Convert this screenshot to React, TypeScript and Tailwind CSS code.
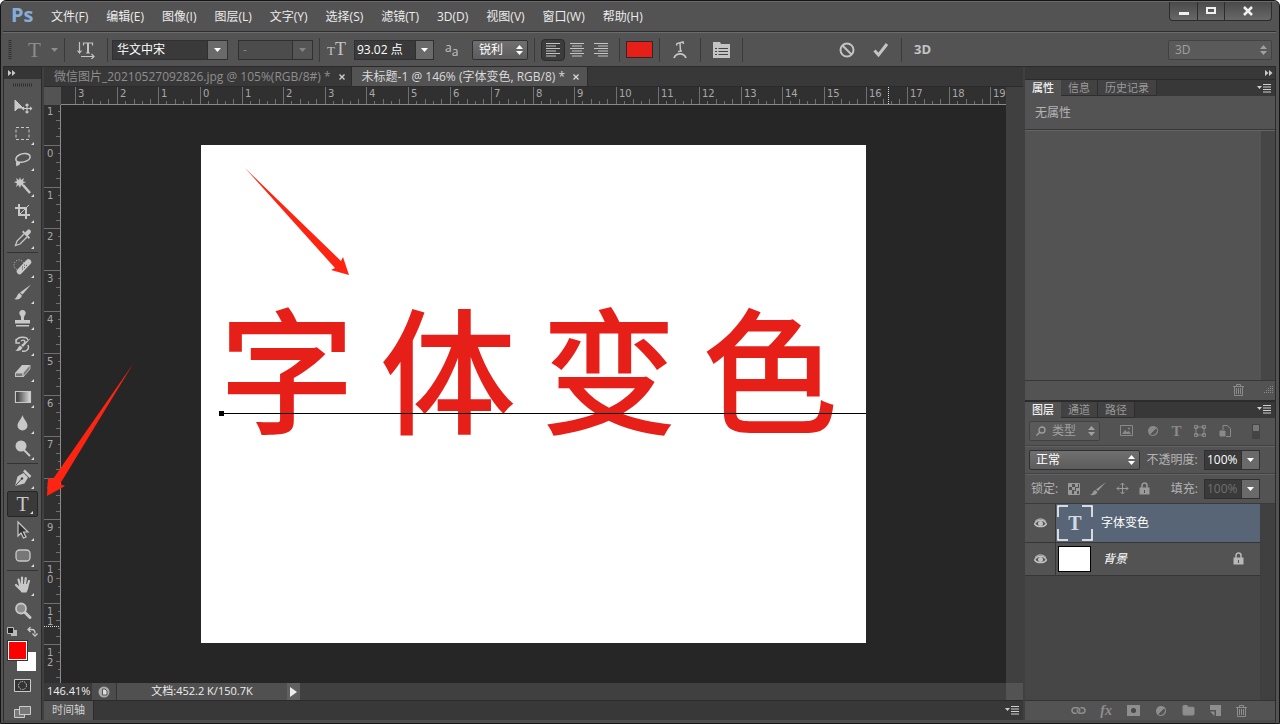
import React from 'react';
import { Link, Folder } from 'lucide-react';

const FONT = "font-['Open_Sans','Noto_Sans_CJK_SC',sans-serif]";

const menus = [
    '文件(F)', '编辑(E)', '图像(I)', '图层(L)', '文字(Y)', '选择(S)',
    '滤镜(T)', '3D(D)', '视图(V)', '窗口(W)', '帮助(H)',
];

const UNIT = 41.6;

const DownArrow: React.FC = () => (
    <svg width="7" height="4" viewBox="0 0 7 4" className="fill-current">
        <path d="M0 0h7L3.5 4z" />
    </svg>
);

const UpDown: React.FC = () => (
    <svg width="7" height="10" viewBox="0 0 7 10" className="fill-current">
        <path d="M0 4L3.5 0 7 4zM0 6h7L3.5 10z" />
    </svg>
);

const Sep: React.FC = () => <div className="h-6 w-px shrink-0 bg-[#3a3a3a]" />;

const PanelMenu: React.FC = () => (
    <button aria-label="面板菜单" className="mr-1 ml-auto text-[#d0d0d0]">
        <svg width="14" height="9" viewBox="0 0 14 9">
            <path d="M0 2h5L2.500 5z" fill="currentColor" />
            <path d="M6 .5h8M6 3h8M6 5.500h8M6 8h8" stroke="currentColor" />
        </svg>
    </button>
);

const Collapse: React.FC = () => (
    <svg width="8" height="6" viewBox="0 0 8 6" fill="#c8c8c8">
        <path d="M0 0l3.500 3L0 6zM4 0l3.500 3L4 6z" />
    </svg>
);

const LockIcon: React.FC = () => (
    <svg width="11" height="13" viewBox="0 0 11 13">
        <path d="M3 6V3.500a2.500 2.500 0 0 1 5 0V6" fill="none" stroke="currentColor" strokeWidth="1.500" />
        <path d="M.5 5.500h10v7H.5zM5 8v3h1V8z" fill="currentColor" fillRule="evenodd" />
    </svg>
);

const TrashIcon: React.FC = () => (
    <svg width="11" height="12" viewBox="0 0 11 12" fill="none" stroke="currentColor">
        <path d="M0 2.500h11M3.500 2V.5h4V2M1.500 3v8.500h8V3M3.500 4v6M5.500 4v6M7.500 4v6" />
    </svg>
);

interface TextSelectProps {
    label: string;
    value: string;
    className: string;
    disabled?: boolean;
}

// Text area with a separate square arrow button on the right
const DropSelect: React.FC<TextSelectProps> = ({ label, value, className, disabled }) => (
    <div className={`flex h-5 border border-[#303030] ${disabled ? 'bg-[#4c4c4c] text-[#858585]' : 'bg-[#3a3a3a] text-white'} ${className}`}>
        <div className="relative flex flex-1">
            <select aria-label={label} disabled={disabled} className="w-full appearance-none bg-transparent pl-1 text-xs leading-4 outline-none">
                <option>{value}</option>
            </select>
            <span className={`pointer-events-none absolute inset-y-0 right-0 flex w-5 items-center justify-center border-l border-[#303030] ${disabled ? 'bg-[#555555]' : 'bg-[#6a6a6a]'}`}>
                <DownArrow />
            </span>
        </div>
    </div>
);

// Raised pop-up select with the double arrow
const PopSelect: React.FC<TextSelectProps & { icon?: React.ReactNode }> = ({ label, value, className, disabled, icon }) => (
    <div className={`relative flex h-5 items-center rounded-[2px] border ${disabled ? 'border-[#424242] bg-[#5a5a5a] text-[#a0a0a0]' : 'border-[#303030] bg-gradient-to-b from-[#707070] to-[#5c5c5c] text-white'} ${className}`}>
        {icon}
        <select aria-label={label} disabled={disabled} className="w-full appearance-none bg-transparent pl-1.5 text-xs leading-4 outline-none">
            <option>{value}</option>
        </select>
        <span className="pointer-events-none absolute right-1">
            <UpDown />
        </span>
    </div>
);

const Combo: React.FC<TextSelectProps> = ({ label, value, className, disabled }) => (
    <div className={`flex h-5 border border-[#303030] bg-[#3a3a3a] ${className}`}>
        <input
            aria-label={label}
            defaultValue={value}
            disabled={disabled}
            className={`w-full min-w-0 bg-transparent pl-0.5 text-xs outline-none ${disabled ? 'text-[#707070]' : 'text-white'}`}
        />
        <button aria-label={`${label}选项`} className="flex w-[18px] shrink-0 items-center justify-center border-l border-[#303030] bg-[#6a6a6a] text-white">
            <DownArrow />
        </button>
    </div>
);

const WindowButtons: React.FC = () => (
    <div className="mr-1 flex h-[19px] self-start overflow-hidden rounded-b-sm border border-t-0 border-[#2c2c2c] bg-gradient-to-b from-[#4a4a4a] to-[#686868]">
        <button aria-label="最小化" className="flex w-7 items-center justify-center border-r border-[#2c2c2c]">
            <svg width="12" height="10"><path d="M1 6h10v3H1z" fill="#f0f0f0" /></svg>
        </button>
        <button aria-label="最大化" className="flex w-[27px] items-center justify-center border-r border-[#2c2c2c]">
            <svg width="12" height="10"><path d="M2 2h8v5H2z" fill="none" stroke="#f0f0f0" strokeWidth="2" /></svg>
        </button>
        <button aria-label="关闭" className="flex w-[46px] items-center justify-center">
            <svg width="12" height="10"><path d="M2 1l8 8M10 1L2 9" stroke="#f0f0f0" strokeWidth="2.500" /></svg>
        </button>
    </div>
);

const MenuBar: React.FC = () => (
    <header className="flex h-[31px] shrink-0 items-center border-t border-[#6a6a6a]">
        <div className="ml-2 w-[25px] pb-1 font-['Open_Sans'] text-[20px] leading-6 font-bold text-[#86add8]">Ps</div>
        <nav className="ml-[15px] flex flex-1 gap-[18px]">
            {menus.map((m) => (
                <button key={m} className="text-xs whitespace-nowrap text-[#ececec]">{m}</button>
            ))}
        </nav>
        <WindowButtons />
    </header>
);

const OptionsBar: React.FC = () => (
    <div className="flex h-[34px] shrink-0 items-center border-t border-[#6c6c6c] text-[#c4c4c4] shadow-[0_-1px_0_#2e2e2e]">
        <svg width="4" height="20" className="ml-[5px]">
            <path d="M2 0v20" stroke="#303030" strokeWidth="3" strokeDasharray="1 1" />
        </svg>
        <button aria-label="文字工具预设" className="ml-4 flex w-8 items-center gap-2.5 text-[#8c8c8c]">
            <span className="font-['Liberation_Serif'] text-[21px] leading-5">T</span>
            <DownArrow />
        </button>
        <div className="ml-1 flex items-center gap-3">
            <Sep />
            <button aria-label="切换文本取向">
                <svg width="18" height="18" viewBox="0 0 18 18" fill="none" stroke="currentColor" strokeWidth="1.200">
                    <path d="M2.500 1v11M.5 9.500l2 2.500 2-2.500M6.500 4.500V2h9v2.500M11 2v10M9 12h4M4 15.500h13M14.500 13l2.500 2.500-2.500 2.500" />
                    <path d="M11 2v10" strokeWidth="2" />
                </svg>
            </button>
            <Sep />
        </div>
        <DropSelect label="字体" value="华文中宋" className="ml-1 w-[116px]" />
        <DropSelect label="字体样式" value="-" className="ml-2.5 mr-1.5 w-[75px]" disabled />
        <Sep />
        <span className="mr-2 ml-[7px] font-['Liberation_Serif'] leading-5">
            <span className="text-[13px]">T</span>
            <span className="text-[18px]">T</span>
        </span>
        <Combo label="字体大小" value="93.02 点" className="w-20" />
        <span className="mr-3 ml-[11px] flex w-[15px] text-[12px] leading-4">
            <span className="pb-1">a</span>
            <span className="pt-1">a</span>
        </span>
        <PopSelect label="消除锯齿" value="锐利" className="mr-1.5 w-14" />
        <Sep />
        <div className="mx-1.5 flex items-center">
            <button aria-label="左对齐" className="flex h-[22px] w-6 items-center justify-center rounded-sm border border-[#2c2c2c] bg-[#3c3c3c]">
                <svg width="14" height="14" stroke="currentColor"><path d="M0 .5h14M0 3h10M0 5.500h14M0 8h10M0 10.500h14M0 13h10" /></svg>
            </button>
            <button aria-label="居中对齐" className="flex h-[22px] w-6 items-center justify-center">
                <svg width="14" height="14" stroke="currentColor"><path d="M0 .5h14M2 3h10M0 5.500h14M2 8h10M0 10.500h14M2 13h10" /></svg>
            </button>
            <button aria-label="右对齐" className="flex h-[22px] w-6 items-center justify-center">
                <svg width="14" height="14" stroke="currentColor"><path d="M0 .5h14M4 3h10M0 5.500h14M4 8h10M0 10.500h14M4 13h10" /></svg>
            </button>
        </div>
        <Sep />
        <button aria-label="文本颜色" className="mx-1.5 h-[17px] w-[27px] border border-[#2a2a2a] bg-[#e71f19]" />
        <div className="flex items-center gap-3">
            <Sep />
            <button aria-label="创建文字变形">
                <svg width="16" height="18" viewBox="0 0 16 18" fill="none" stroke="currentColor" strokeWidth="1.500">
                    <path d="M4.500 4.500L5 2.500l6-1.500.5 2M8 2l.5 8M6 10.500l4-.5" />
                    <path d="M2 17c2-5.500 10-5.500 12 0" strokeWidth="1.800" />
                </svg>
            </button>
            <Sep />
            <button aria-label="切换字符面板">
                <svg width="17" height="17" viewBox="0 0 17 17">
                    <path d="M0 1h7l1 2h9v14H0z" fill="currentColor" />
                    <path d="M2 7.500h2M5.500 7.500H15M2 10.500h2M5.500 10.500H15M2 13.500h2M5.500 13.500H15" stroke="#444" />
                </svg>
            </button>
            <Sep />
        </div>
        <button aria-label="取消" className="ml-24">
            <svg width="16" height="16" fill="none" stroke="currentColor" strokeWidth="2"><circle cx="8" cy="8" r="6.500" /><path d="M3.500 3.500l9 9" /></svg>
        </button>
        <button aria-label="提交" className="mr-3 ml-[18px]">
            <svg width="16" height="16" fill="none" stroke="currentColor" strokeWidth="3"><path d="M1.500 8.500l4 4.500L14 2" /></svg>
        </button>
        <Sep />
        <button className="ml-3 text-[13px] font-bold">3D</button>
        <PopSelect label="工作区" value="3D" className="mr-1 ml-auto w-[104px]" disabled />
    </div>
);

interface Tool {
    name: string;
    icon: React.ReactNode;
    sepBefore?: boolean;
    noMore?: boolean;
}

const tools: Tool[] = [
    {
        name: '移动工具',
        noMore: true,
        icon: (
            <>
                <path d="M2 2v11l3-3h5z" fill="currentColor" />
                <path d="M14 6v9M9.500 10.500h9M12.500 7.500L14 6l1.500 1.500M12.500 13.500L14 15l1.500-1.500M11 9l-1.500 1.500L11 12M17 9l1.500 1.500L17 12" strokeWidth="1.200" />
            </>
        ),
    },
    { name: '矩形选框工具', icon: <path d="M3 3.500h13v12H3z" strokeDasharray="3 2" /> },
    {
        name: '套索工具',
        icon: <path d="M5 12c-3-1-3-5 1-7 4-2.500 10-2 11 1 1 4-6 7-11 6-2-.5-3 1-2 2s3 0 2-1c-1-.5-3 0-2 3" strokeWidth="1.500" />,
    },
    {
        name: '魔棒工具',
        icon: (
            <>
                <path d="M7 1l1 3 3-2-1 3.500 3 .5-3 1.500 1 3.500-3-2-1 3-1.500-3L3 11l1-3.500L1 6l3-1-1-3 3 2z" fill="currentColor" stroke="none" />
                <path d="M10 9l7 8" strokeWidth="2.500" />
            </>
        ),
    },
    {
        name: '裁剪工具',
        icon: (
            <>
                <path d="M6 2v11h11M2 6h11v11" strokeWidth="2" />
                <path d="M6 13L16 3" />
            </>
        ),
    },
    {
        name: '吸管工具',
        icon: (
            <>
                <path d="M11 6l-7 7-1.500 4.500L7 16l7-7" strokeWidth="1.300" />
                <path d="M9 4l7 7 1-1.500-2-2 2.500-2.500c1.500-2-1-4.500-3-3L12 4.500 10.500 2.500z" fill="currentColor" stroke="none" />
            </>
        ),
    },
    {
        name: '污点修复画笔工具',
        sepBefore: true,
        icon: (
            <>
                <circle cx="6" cy="8" r="5" strokeDasharray="1 1.500" />
                <path d="M6.500 14.500L15.500 5" strokeWidth="5.500" strokeLinecap="round" />
                <path d="M9 10l1 .1M11 8l1 .1M11 10.500l1 .1M9 12l1 .1M13 8.500l1 .1" stroke="#555" />
            </>
        ),
    },
    {
        name: '画笔工具',
        icon: <path d="M18 1.500l-8.500 10-2.500-2zM6.500 10l2.500 2.500c-1 4-5 4.500-8 3.500 3-.5 3-5 5.500-6z" fill="currentColor" stroke="none" />,
    },
    {
        name: '仿制图章工具',
        icon: <path d="M9.500 1a3 3 0 0 1 2.500 5l-1 2v3h6v3.500H2V11h6V8L7 6a3 3 0 0 1 2.500-5zM3 16h13v1.500H3z" fill="currentColor" stroke="none" />,
    },
    {
        name: '历史记录画笔工具',
        icon: (
            <>
                <path d="M3 7c0-6 11-6 12-2M3 4v4h4M8 6c3-2 5 0 3 2M15 10c2 5-3 7-6 6" strokeWidth="1.400" />
                <path d="M18 3l-8 9-2-2zM7 10.500l2.500 2c-1 3.500-5 4-7.500 3 3-.5 3-4 5-5z" fill="currentColor" stroke="none" />
            </>
        ),
    },
    {
        name: '橡皮擦工具',
        icon: (
            <>
                <path d="M2 12l7-8h8v4l-7 8H2z" fill="currentColor" stroke="none" />
                <path d="M2.500 12h7.500v3.500H2.500zM10 12l7-8v4l-7 8z" fill="#777" stroke="currentColor" strokeWidth="0.800" />
            </>
        ),
    },
    { name: '渐变工具', icon: <path d="M2.500 4.500h15v11h-15z" fill="url(#grad)" strokeWidth="1.200" /> },
    { name: '模糊工具', icon: <path d="M9.500 2c1 4 5 7 5 10.500a5 5 0 0 1-10 0C4.500 9 8.500 6 9.500 2z" fill="currentColor" stroke="none" /> },
    {
        name: '减淡工具',
        icon: (
            <>
                <circle cx="8" cy="7" r="5.500" fill="currentColor" stroke="none" />
                <path d="M11 11l6 6" strokeWidth="2" />
            </>
        ),
    },
    {
        name: '钢笔工具',
        sepBefore: true,
        icon: (
            <>
                <path d="M2 18l2.500-9.500 6-3.500 4.500 4.500-3.500 6z" fill="currentColor" stroke="none" />
                <path d="M2.500 17.500l6-6.500" stroke="#444" />
                <circle cx="9" cy="10.500" r="1.200" fill="#444" stroke="none" />
                <path d="M11 2.500l6.500 6.500" strokeWidth="2.500" />
            </>
        ),
    },
    { name: '横排文字工具', icon: null },
    { name: '路径选择工具', icon: <path d="M5 2v14l3-3 2.500 5 2.500-1-2.500-5H15z" fill="#333" strokeWidth="1.200" /> },
    { name: '圆角矩形工具', icon: <rect x="3" y="4" width="14" height="11" rx="3.500" fill="#777" strokeWidth="1.300" /> },
    {
        name: '抓手工具',
        sepBefore: true,
        icon: (
            <>
                <path d="M7 10L5.500 4.500M9 9V2.500M12 9l.8-6M14.500 10.500L16 6M7 14l-4-4" strokeWidth="2.200" strokeLinecap="round" />
                <path d="M6 9h9.500c.5 4-1 6-2 8.500h-5C7 15 5 13 6 9z" fill="currentColor" stroke="none" />
            </>
        ),
    },
    {
        name: '缩放工具',
        noMore: true,
        icon: (
            <>
                <circle cx="8" cy="7.500" r="5" fill="#8c8c8c" strokeWidth="1.800" />
                <path d="M12 11.500l5 5" strokeWidth="3" strokeLinecap="round" />
            </>
        ),
    },
];

const Toolbox: React.FC = () => (
    <aside className="flex w-[38px] shrink-0 flex-col border-r border-[#2b2b2b] bg-[#535353]">
        <div className="flex h-3 shrink-0 items-center bg-[#353535] pl-1">
            <Collapse />
        </div>
        <svg width="20" height="4" className="mx-auto mt-1 mb-2 shrink-0">
            <path d="M0 2h20" stroke="#303030" strokeWidth="3" strokeDasharray="1 1" />
        </svg>
        <svg width="0" height="0" className="absolute">
            <linearGradient id="grad"><stop stopColor="#333" /><stop offset="1" stopColor="#ddd" /></linearGradient>
        </svg>
        <div className="flex flex-col px-[3px]">
            {tools.map((t) => (
                <React.Fragment key={t.name}>
                    {t.sepBefore && <div className="my-px h-px bg-[#333333]" />}
                    <button
                        aria-label={t.name}
                        className={`relative flex h-[26px] items-center justify-center text-[#c8c8c8] ${t.icon ? '' : 'rounded-[2px] border border-[#262626] bg-[#3a3a3a]'}`}
                    >
                        {t.icon ? (
                            <svg width="20" height="20" viewBox="0 0 20 20" fill="none" stroke="currentColor">{t.icon}</svg>
                        ) : (
                            <span className="font-['Liberation_Serif'] text-[20px] leading-5">T</span>
                        )}
                        {!t.noMore && (
                            <svg width="3" height="3" className="absolute right-1 bottom-0.5"><path d="M3 0v3H0z" fill="#e0e0e0" /></svg>
                        )}
                    </button>
                </React.Fragment>
            ))}
        </div>
        <div className="mt-0.5 flex justify-between px-[3px]">
            <button aria-label="默认颜色">
                <svg width="11" height="11"><path d="M4 4h6v6H4z" fill="#bbb" /><path d="M.5 1.500h6v6h-6z" fill="#222" stroke="#bbb" /></svg>
            </button>
            <button aria-label="切换颜色">
                <svg width="11" height="11" fill="none" stroke="#c8c8c8" strokeWidth="1.300"><path d="M3.500 1L1 3.500 3.500 6M1 3.500h4q3 0 3 4M5.500 7.500L8 10l2.500-2.500" /></svg>
            </button>
        </div>
        <div className="relative mt-1 ml-1 h-[30px] w-7 shrink-0">
            <button aria-label="背景色" className="absolute right-0 bottom-0 h-[19px] w-[19px] bg-white" />
            <button aria-label="前景色" className="absolute top-0 left-0 h-[19px] w-[19px] border border-white bg-[#fe0000] outline outline-[#333]" />
        </div>
        <button aria-label="快速蒙版" className="mx-auto mt-2">
            <svg width="18" height="14" fill="none" stroke="#ccc"><path d="M.5.5h16v12H.5z" fill="#333" /><circle cx="8.500" cy="6.500" r="4" strokeDasharray="1.500 1" /></svg>
        </button>
        <button aria-label="屏幕模式" className="mx-auto mt-3">
            <svg width="18" height="14" fill="#777" stroke="#ccc"><path d="M.5 4.500h10v8H.5z" /><path d="M5.500 1.500h11v8h-11z" /></svg>
        </button>
    </aside>
);

const TabBar: React.FC = () => (
    <div className="flex h-5 shrink-0 border-b border-[#2b2b2b] bg-[#383838] text-xs">
        <div className="flex items-center gap-2 border-r border-[#2b2b2b] pr-1.5 pl-2.5 text-[#8e8e8e]">
            <button className="whitespace-nowrap">微信图片_20210527092826.jpg @ 105%(RGB/8#) *</button>
            <button aria-label="关闭标签" className="text-[#d0d0d0]">
                <svg width="6" height="6" stroke="currentColor" strokeWidth="1.300"><path d="M.5.5l5 5M5.500.5l-5 5" /></svg>
            </button>
        </div>
        <div className="flex items-center gap-2 border-r border-[#2b2b2b] bg-[#535353] pr-2 pl-2.5 text-[#dadada]">
            <button className="whitespace-nowrap">未标题-1 @ 146% (字体变色, RGB/8) *</button>
            <button aria-label="关闭标签">
                <svg width="6" height="6" stroke="currentColor" strokeWidth="1.300"><path d="M.5.5l5 5M5.500.5l-5 5" /></svg>
            </button>
        </div>
    </div>
);

const units = Array.from({ length: 23 }, (_, i) => i - 3);

const HRuler: React.FC = () => (
    <svg className="h-[18px] min-w-0 flex-1 border-b border-[#8a8a8a] bg-[#303030]">
        {units.map((u) => {
            const x = Math.round(139 + u * UNIT);
            return (
                <g key={u}>
                    <path d={`M${x + 0.5} 0v17`} stroke="#707070" />
                    {[1, 2, 3, 4].map((k) => (
                        <path key={k} d={`M${Math.round(x + (k * UNIT) / 5) + 0.5} ${k % 2 ? 14 : 12}v5`} stroke="#707070" />
                    ))}
                    {u < 20 && (
                        <text x={x + 3} y="10" fill="#a8a8a8" fontSize="10" fontFamily="DejaVu Sans, sans-serif">{Math.abs(u)}</text>
                    )}
                </g>
            );
        })}
        <path d="M827.500 0v17" stroke="#ddd" strokeDasharray="1 1" />
    </svg>
);

const VRuler: React.FC = () => (
    <svg className="w-[17px] shrink-0 border-r border-[#8a8a8a] bg-[#303030]">
        {units.filter((u) => u > -2 && u < 13).map((u) => {
            const y = Math.round(40 + u * UNIT);
            return (
                <g key={u}>
                    <path d={`M0 ${y + 0.5}h17`} stroke="#707070" />
                    {[1, 2, 3, 4].map((k) => (
                        <path key={k} d={`M${k % 2 ? 14 : 12} ${Math.round(y + (k * UNIT) / 5) + 0.5}h5`} stroke="#707070" />
                    ))}
                    {String(Math.abs(u)).split('').map((d, i) => (
                        <text key={i} x="3" y={y + 12 + i * 10} fill="#a8a8a8" fontSize="10" fontFamily="DejaVu Sans, sans-serif">{d}</text>
                    ))}
                </g>
            );
        })}
        <path d="M0 521.500h17" stroke="#ddd" strokeDasharray="1 1" />
    </svg>
);

const Artboard: React.FC = () => (
    <div className="relative aspect-[4/3] w-[665px] max-w-full bg-white">
        <div className="absolute top-[145px] left-[18px] flex gap-[25px] font-['Noto_Sans_CJK_SC',sans-serif] text-[136px] leading-[150px] font-medium text-[#e71f19]">
            <span>字</span>
            <span>体</span>
            <span>变</span>
            <span>色</span>
        </div>
        <div className="absolute top-[268px] right-0 left-5 h-px bg-black">
            <div className="absolute -top-0.5 -left-0.5 h-[5px] w-[5px] bg-black" />
        </div>
        <svg className="absolute top-5 left-10" width="112" height="114" fill="#fe2412">
            <path d="M4 3l96 93 2-4 6 18-18-5 4-2z" />
        </svg>
    </div>
);

const Workspace: React.FC = () => (
    <main className="flex min-w-0 flex-1 flex-col bg-[#404040]">
        <TabBar />
        <div className="flex min-h-0 flex-1">
            <div className="relative flex min-w-0 flex-1 flex-col bg-[#262626]">
                <div className="flex h-[18px] shrink-0">
                    <div className="w-[17px] bg-[#535353]" />
                    <HRuler />
                </div>
                <div className="flex min-h-0 flex-1">
                    <VRuler />
                    <div className="flex min-w-0 flex-1 items-center justify-center overflow-hidden">
                        <Artboard />
                    </div>
                </div>
                <svg className="pointer-events-none absolute top-[274px] left-0" width="92" height="140" fill="#fe2412">
                    <path d="M89 3L16 123l5 2-18 10 1-18 5 1z" />
                </svg>
            </div>
            <div className="w-[17px] bg-[#404040]" />
        </div>
        <div className="flex h-[17px] shrink-0 items-stretch bg-[#404040] text-[11px] leading-4 text-[#eeeeee]">
            <div className="w-12 bg-[#3a3a3a] pl-[3px]">146.41%</div>
            <button aria-label="文档信息" className="flex w-6 items-center justify-center bg-[#4c4c4c]">
                <svg width="12" height="12"><circle cx="6" cy="6" r="5.500" fill="#aaa" /><path d="M4.500 3h2.500l2 2v4H4.500z" fill="#ddd" stroke="#555" /></svg>
            </button>
            <div className="w-[171px] border-l border-[#333] bg-[#505050] text-center">文档:452.2 K/150.7K</div>
            <button aria-label="状态栏菜单" className="flex w-[13px] items-center justify-center bg-[#606060]">
                <svg width="7" height="10"><path d="M0 0l7 5-7 5z" fill="#eee" /></svg>
            </button>
            <div className="ml-auto w-[17px] bg-[#535353]" />
        </div>
        <div className="flex h-5 shrink-0 items-center border-t border-[#2b2b2b] bg-[#383838]">
            <button className="h-full border-r border-[#2b2b2b] bg-[#535353] px-2 text-[11px] text-[#d0d0d0]">时间轴</button>
            <PanelMenu />
        </div>
    </main>
);

const PanelTabs: React.FC<{ tabs: string[] }> = ({ tabs }) => (
    <div className="flex h-[17px] shrink-0 items-center border-t border-[#2b2b2b] bg-[#383838] leading-4">
        {tabs.map((t, i) => (
            <button
                key={t}
                className={i === 0
                    ? 'h-full bg-[#535353] px-[7px] text-[11px] font-medium text-[#f0f0f0]'
                    : 'h-full border-r border-b border-[#2e2e2e] bg-[#424242] px-[7px] text-[11px] text-[#9a9a9a]'}
            >
                {t}
            </button>
        ))}
        <PanelMenu />
    </div>
);

const Eye: React.FC = () => (
    <svg width="13" height="10" viewBox="0 0 13 10">
        <path d="M.5 6C3 1 10 1 12.500 6 10 9.500 3 9.500.5 6z" fill="none" stroke="#c0c0c0" strokeWidth="1.300" />
        <circle cx="6.500" cy="5.500" r="2.500" fill="#c0c0c0" />
        <path d="M1 3.500C4 0 9 0 12 3.500" fill="none" stroke="#c0c0c0" />
    </svg>
);

const AdjustIcon: React.FC = () => (
    <svg width="12" height="12"><circle cx="6" cy="6" r="5" fill="currentColor" /><path d="M9.500 2.500l-7 7a5 5 0 0 0 7-7z" fill="#555" stroke="currentColor" /></svg>
);

const PropertiesPanel: React.FC = () => (
    <section className="flex min-h-0 flex-[5] flex-col">
        <PanelTabs tabs={['属性', '信息', '历史记录']} />
        <div className="h-[34px] shrink-0 border-b border-[#383838] pt-[9px] pl-2.5 text-xs leading-4 text-[#b4b4b4]">无属性</div>
        <div className="flex flex-1 border-t border-[#646464]">
            <div className="flex-1" />
            <div className="w-3.5 bg-[#464646]" />
        </div>
        <div className="flex h-[19px] shrink-0 items-center justify-end gap-5 border-t border-[#383838] pr-0.5 text-[#8a8a8a]">
            <button aria-label="删除"><TrashIcon /></button>
            <svg width="9" height="9" stroke="currentColor" strokeDasharray="1 1"><path d="M6 1.500h3M4 3.500h5M2 5.500h7M0 7.500h9" /></svg>
        </div>
    </section>
);

const LayersPanel: React.FC = () => (
    <section className="mt-px flex min-h-0 flex-[5] flex-col border-t border-[#2b2b2b]">
        <PanelTabs tabs={['图层', '通道', '路径']} />
        <div className="flex h-7 shrink-0 items-center border-b border-[#424242] pr-[15px] pl-1 text-[#8a8a8a]">
            <PopSelect
                label="图层过滤"
                value="类型"
                disabled
                className="w-[71px] pl-1.5"
                icon={<svg width="10" height="10" viewBox="0 0 10 10" fill="none" stroke="currentColor" strokeWidth="1.300" className="shrink-0"><circle cx="6" cy="4" r="3" /><path d="M4 6L.5 9.500" /></svg>}
            />
            <div className="ml-5 flex flex-1 items-center justify-between">
                <button aria-label="像素图层"><svg width="14" height="12"><path d="M.5.5h12v10H.5z" fill="none" stroke="currentColor" /><path d="M2 9l3-4 2 2 2-1 2 3z" fill="currentColor" /><circle cx="9" cy="3.500" r="1" fill="currentColor" /></svg></button>
                <button aria-label="调整图层"><AdjustIcon /></button>
                <button className="font-['Liberation_Serif'] text-[15px] leading-4 font-bold">T</button>
                <button aria-label="形状图层"><svg width="12" height="12" fill="none" stroke="currentColor"><path d="M2 2h8v8H2zM.5.5h3v3h-3zM8.500.5h3v3h-3zM.5 8.500h3v3h-3zM8.500 8.500h3v3h-3z" /></svg></button>
                <button aria-label="智能对象"><svg width="12" height="12" fill="none" stroke="currentColor"><path d="M4 5V.5h4l3.500 3v8H7" /><path d="M1 6h5v5H1z" fill="currentColor" /></svg></button>
                <button aria-label="过滤开关" className="ml-2"><svg width="8" height="15"><path d="M0 0h8v15H0z" fill="#444" /><path d="M1 1h6v6H1z" fill="#777" /></svg></button>
            </div>
        </div>
        <div className="flex h-7 shrink-0 items-center justify-between border-t border-b border-t-[#626262] border-b-[#424242] pr-[15px] pl-1">
            <PopSelect label="混合模式" value="正常" className="w-[111px]" />
            <span className="text-xs text-[#b4b4b4]">不透明度:</span>
            <Combo label="不透明度" value="100%" className="w-14" />
        </div>
        <div className="flex h-[30px] shrink-0 items-center border-t border-b border-t-[#626262] border-b-[#3a3a3a] pr-[15px] pl-1.5 text-[#9a9a9a]">
            <span className="text-xs text-[#b4b4b4]">锁定:</span>
            <div className="ml-2.5 flex flex-1 items-center gap-2.5">
                <button aria-label="锁定透明像素"><svg width="12" height="12"><path d="M.5.5h11v11H.5z" fill="none" stroke="currentColor" /><path d="M1 1h3v3H1zM7 1h3v3H7zM4 4h3v3H4zM8 5h3v3H8zM1 7h3v4H1zM6 8h3v3H6z" fill="currentColor" /></svg></button>
                <button aria-label="锁定图像像素"><svg width="16" height="14"><path d="M16 0L8 9 6 7.500zM5 8l2.500 2c-1 3-4.500 3.500-7.500 3 3-1 3-4 5-5z" fill="currentColor" /></svg></button>
                <button aria-label="锁定位置"><svg width="13" height="13" fill="none" stroke="currentColor"><path d="M6.500 1v11M1 6.500h11M4.500 3l2-2 2 2M4.500 10l2 2 2-2M3 4.500l-2 2 2 2M10 4.500l2 2-2 2" /></svg></button>
                <button aria-label="锁定全部"><LockIcon /></button>
            </div>
            <span className="mr-1.5 text-xs text-[#b4b4b4]">填充:</span>
            <Combo label="填充" value="100%" className="w-14" disabled />
        </div>
        <div className="flex min-h-0 flex-1 bg-[#464646]">
            <div className="min-w-0 flex-1 border-r border-[#3e3e3e]">
                <div className="flex h-[39px] items-stretch border-b border-[#363636] bg-[#586577]">
                    <button aria-label="显示图层" className="flex w-[31px] items-center justify-center border-r border-[#363636] bg-[#535353]"><Eye /></button>
                    <div className="flex items-center gap-2 pl-px">
                        <div className="relative flex h-9 w-9 items-center justify-center font-['Liberation_Serif'] text-[20px] font-bold text-[#d5dae2]">
                            <svg width="36" height="36" fill="none" stroke="#fff" strokeWidth="1.500" className="absolute inset-0">
                                <path d="M1 12V1h10M25 1h10v11M1 24v11h10M25 35h10V24" />
                            </svg>
                            <span>T</span>
                        </div>
                        <button className="text-xs text-white">字体变色</button>
                    </div>
                </div>
                <div className="flex h-[33px] items-stretch border-b border-[#363636] bg-[#535353]">
                    <button aria-label="显示图层" className="flex w-[31px] items-center justify-center border-r border-[#363636]"><Eye /></button>
                    <div className="flex flex-1 items-center gap-3 pr-4 pl-0.5">
                        <div className="h-[26px] w-[33px] border border-black bg-white" />
                        <button className="text-xs text-white italic">背景</button>
                        <span className="ml-auto text-[#b8b8b8]"><LockIcon /></span>
                    </div>
                </div>
            </div>
            <div className="w-3.5 bg-[#404040]" />
        </div>
        <div className="flex h-5 shrink-0 items-center justify-end gap-[15px] border-t border-[#333] pr-7 text-[#8e8e8e]">
            <button aria-label="链接图层"><Link size={13} strokeWidth={3} className="rotate-45" /></button>
            <button className="font-['Liberation_Serif'] text-[14px] leading-4 font-bold italic">fx</button>
            <button aria-label="添加蒙版"><svg width="13" height="11"><path d="M0 0h13v11H0z" fill="currentColor" /><circle cx="6.500" cy="5.500" r="2.500" fill="#484848" /></svg></button>
            <button aria-label="新建调整图层"><AdjustIcon /></button>
            <button aria-label="新建组"><Folder size={13} fill="currentColor" /></button>
            <button aria-label="新建图层"><svg width="11" height="11"><path d="M0 0h11v11H6V5H0z" fill="currentColor" /><path d="M0 6.500h4.500V11z" fill="currentColor" /></svg></button>
            <button aria-label="删除图层"><TrashIcon /></button>
        </div>
    </section>
);

const App: React.FC = () => (
    <div className={`flex h-screen flex-col overflow-hidden rounded-t-md border border-[#151515] bg-[#535353] pr-[3px] pl-0.5 ${FONT}`}>
        <MenuBar />
        <OptionsBar />
        <div className="flex min-h-0 flex-1 gap-0.5 border border-b-[3px] border-[#2b2b2b] border-b-[#4c4c4c] bg-[#404040]">
            <Toolbox />
            <Workspace />
            <aside className="flex w-[250px] shrink-0 flex-col bg-[#535353]">
                <div className="flex h-3 shrink-0 items-center justify-end bg-[#383838] pr-0.5">
                    <Collapse />
                </div>
                <PropertiesPanel />
                <LayersPanel />
            </aside>
        </div>
    </div>
);

export default App;
